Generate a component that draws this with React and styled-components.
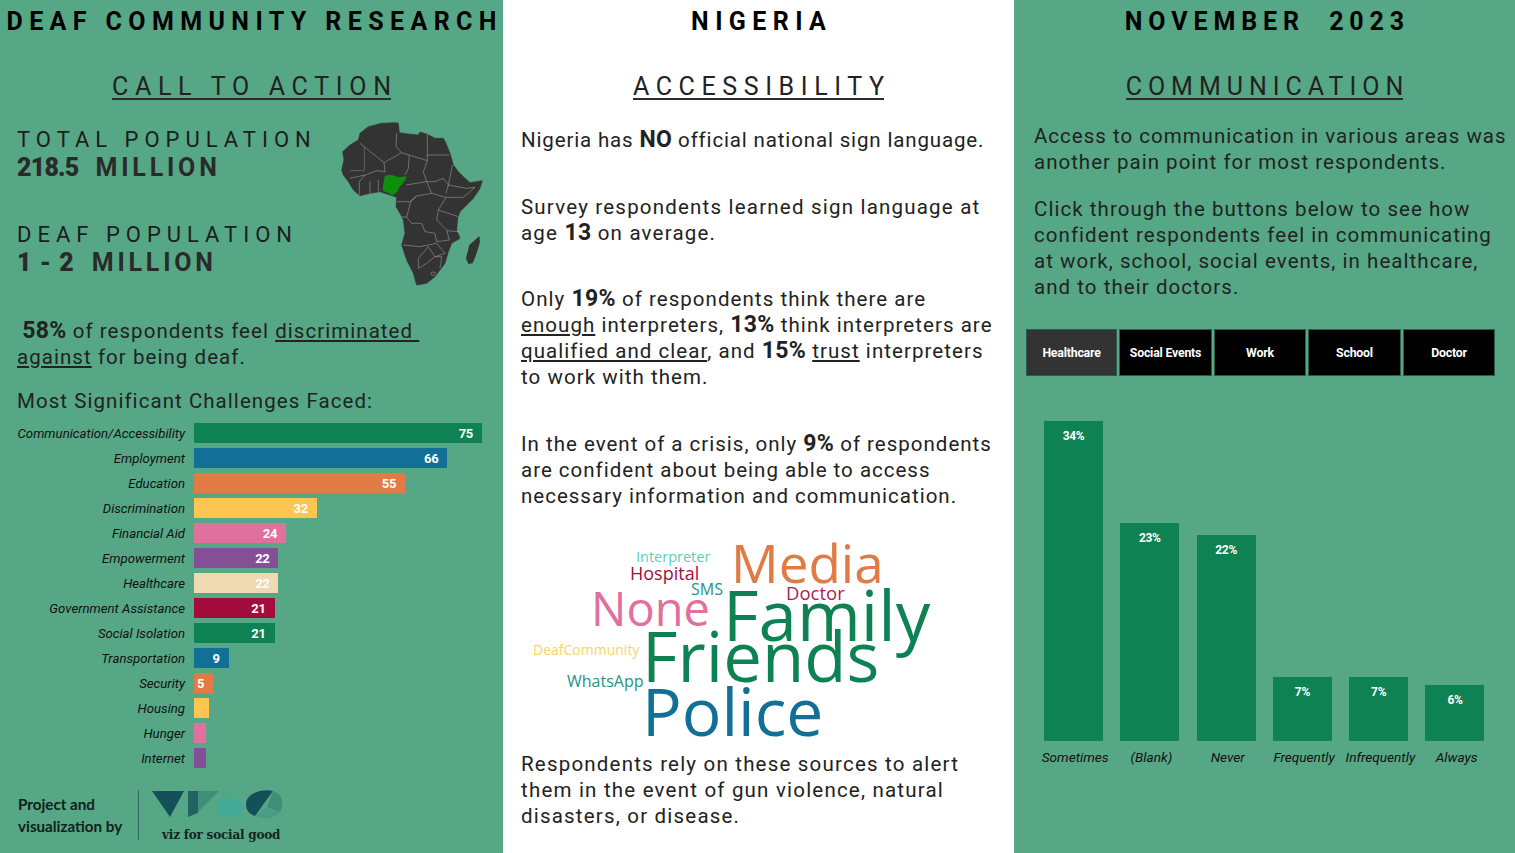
import React from 'react';
import styled, { createGlobalStyle } from 'styled-components';

const Global = createGlobalStyle`
  html, body { margin: 0; padding: 0; background: #fff; }
  body { font-family: 'Roboto', 'Liberation Sans', sans-serif; color: #1d1d1d; }
`;

const GREEN = '#56a786';
const FOREST = '#0f8254';
const BLUE = '#127096';
const ORANGE = '#e07b45';
const YELLOW = '#fec551';
const PINK = '#e0709d';
const PURPLE = '#854f98';
const SAND = '#efd9b3';
const CRIMSON = '#a40c3d';

const Page = styled.div`
  display: grid;
  grid-template-columns: 503px 511px 501px;
  width: 1515px;
  height: 853px;
  overflow: hidden;
`;

const Column = styled.section`
  background: ${p => (p.$white ? '#fff' : GREEN)};
  display: flex;
  flex-direction: column;
  min-width: 0;
`;

const Title = styled.h1`
  margin: 8px 0 0;
  height: 27px;
  line-height: 27px;
  font-size: 25px;
  font-weight: 700;
  letter-spacing: ${p => p.$spacing}px;
  text-indent: ${p => p.$spacing}px;
  color: #000;
  text-align: center;
  white-space: pre;
`;

const Heading = styled.h2`
  margin: 37px 0 0;
  height: 29px;
  padding-left: ${p => p.$spacing}px;
  line-height: 29px;
  font-size: 25px;
  font-weight: 400;
  letter-spacing: ${p => p.$spacing}px;
  text-align: center;
  color: #222;
  span {
    position: relative;
    display: inline-block;
  }
  span::after {
    content: '';
    position: absolute;
    left: 0;
    right: ${p => p.$spacing}px;
    bottom: 1px;
    height: 2px;
    background: #2b2b2b;
  }
`;

const Stats = styled.div`
  display: flex;
  justify-content: space-between;
  padding: 24px 20px 0 17px;
`;

const StatBlock = styled.div`
  margin-bottom: 38px;
  white-space: nowrap;
`;

const StatLabel = styled.div`
  font-size: 22px;
  line-height: 29px;
  letter-spacing: 6px;
`;

const StatValue = styled.div`
  font-size: 25px;
  line-height: 28px;
  font-weight: 700;
  letter-spacing: 3.8px;
  color: #2a2a2a;
  word-spacing: 7px;
  b { letter-spacing: ${p => p.$digits}px; word-spacing: 0; }
`;

const MapBox = styled.div`
  width: 180px;
  height: 190px;
  margin: -15px -17px 0 0;
`;

const Para = styled.p`
  margin: ${p => p.$top || 0}px 0 0;
  padding-left: ${p => p.$left || 18}px;
  font-size: 20.5px;
  line-height: 26px;
  letter-spacing: ${p => p.$ls || 1.05}px;
  color: #222;
  white-space: nowrap;
  strong { font-weight: 700; font-size: 23px; letter-spacing: 0.3px; }
  u { text-decoration-thickness: 2px; text-underline-offset: 2px; }
`;

const Challenges = styled.div`
  display: grid;
  grid-template-columns: 186px 1fr;
  grid-auto-rows: 25px;
  align-items: center;
  margin-top: 6px;
`;

const RowLabel = styled.div`
  text-align: right;
  padding: 2px 1px 0 0;
  font-size: 13.2px;
  font-style: italic;
  color: #111;
  white-space: nowrap;
`;

const HBar = styled.div`
  height: 20px;
  margin-left: 8px;
  background: ${p => p.$color};
  color: #fff;
  font-size: 13px;
  font-weight: 700;
  letter-spacing: -0.3px;
  text-align: right;
  line-height: 21px;
  padding-right: 9px;
  box-sizing: border-box;
`;

const Credit = styled.div`
  display: flex;
  align-items: flex-start;
  margin: 20px 0 0 18px;
`;

const CreditText = styled.div`
  font-family: 'Lato', sans-serif;
  font-size: 15.2px;
  font-weight: 700;
  line-height: 22px;
  width: 120px;
  padding-top: 3px;
  color: #12201c;
  white-space: nowrap;
`;

const CreditDivider = styled.div`
  width: 1px;
  height: 50px;
  background: #2d6a64;
`;

const LogoWrap = styled.div`
  margin-left: 12px;
  display: flex;
  flex-direction: column;
  align-items: flex-start;
`;

const LogoText = styled.div`
  font-family: 'DejaVu Serif', serif;
  font-weight: 700;
  font-size: 12px;
  letter-spacing: -0.2px;
  line-height: 16px;
  margin: 5px 0 0 11px;
  color: #14241f;
  white-space: nowrap;
`;

const Cloud = styled.div`
  position: relative;
  height: 217px;
  margin-top: 25px;
`;

const Word = styled.span`
  position: absolute;
  left: ${p => p.$x}px;
  top: ${p => p.$y}px;
  font-family: 'Open Sans', 'Noto Sans', sans-serif;
  font-size: ${p => p.$size}px;
  line-height: 1;
  color: ${p => p.$color};
  white-space: nowrap;
`;

const Tabs = styled.div`
  display: flex;
  gap: 2px;
  margin: 29px 0 0 12px;
`;

const Tab = styled.button`
  width: ${p => p.$w}px;
  height: 47px;
  border: 1px solid #2c5d4a;
  background: ${p => (p.$active ? '#333' : '#000')};
  color: #fff;
  font-family: inherit;
  font-weight: 700;
  font-size: 12.3px;
  letter-spacing: -0.2px;
  padding: 0;
`;

const Chart = styled.div`
  display: grid;
  grid-template-columns: repeat(6, 76.3px);
  margin: 45px 0 0 23px;
  height: 320px;
  align-items: end;
`;

const VBar = styled.div`
  width: 59px;
  margin-left: 7px;
  height: ${p => p.$h}px;
  background: ${FOREST};
  color: #fff;
  font-size: 12px;
  font-weight: 700;
  letter-spacing: -0.3px;
  text-align: center;
  padding-top: 8px;
  box-sizing: border-box;
`;

const XAxis = styled.div`
  display: grid;
  grid-template-columns: repeat(6, 76.3px);
  margin: 8px 0 0 23px;
`;

const XLabel = styled.div`
  font-size: 13.6px;
  font-style: italic;
  text-align: center;
  color: #111;
  white-space: nowrap;
`;

const challenges = [
  ['Communication/Accessibility', 75, FOREST],
  ['Employment', 66, BLUE],
  ['Education', 55, ORANGE],
  ['Discrimination', 32, YELLOW],
  ['Financial Aid', 24, PINK],
  ['Empowerment', 22, PURPLE],
  ['Healthcare', 22, SAND],
  ['Government Assistance', 21, CRIMSON],
  ['Social Isolation', 21, FOREST],
  ['Transportation', 9, BLUE],
  ['Security', 5, ORANGE],
  ['Housing', 4, YELLOW],
  ['Hunger', 3, PINK],
  ['Internet', 3, PURPLE],
];

const words = [
  ['Media', 731, 536, 53, ORANGE],
  ['Interpreter', 636, 550, 14.5, '#5fcdbb'],
  ['Hospital', 630, 564, 18, CRIMSON],
  ['SMS', 691, 581, 16, '#2a9285'],
  ['Doctor', 786, 584, 18.5, '#ad1c50'],
  ['None', 591, 585, 47, PINK],
  ['Family', 723, 580, 69, FOREST],
  ['Friends', 642, 621, 69, FOREST],
  ['DeafCommunity', 533, 643, 14, '#fbd45f'],
  ['WhatsApp', 567, 673, 16, '#2a9285'],
  ['Police', 642, 677, 66, BLUE],
];

const tabs = [['Healthcare', 91, true], ['Social Events', 93], ['Work', 92], ['School', 93], ['Doctor', 92]];

const answers = [
  ['Sometimes', 34, 320], ['(Blank)', 23, 218], ['Never', 22, 206],
  ['Frequently', 7, 64], ['Infrequently', 7, 64], ['Always', 6, 56],
];

const AfricaMap = () => (
  <svg width="180" height="190" viewBox="0 0 540 570">
    <path fill="#333" stroke="#333" strokeWidth="2" strokeLinejoin="round" d="M225 38L235 40L238 68L265 72L295 75L300 66L320 72L345 85L370 85L378 100L390 130L400 165L415 185L435 205L450 218L487 212L480 235L460 265L440 285L420 305L413 325L410 360L420 385L395 400L385 425L375 460L345 500L320 520L290 525L280 490L260 450L245 405L255 370L250 330L240 310L228 290L230 262L210 255L180 245L150 250L120 257L100 240L85 215L70 195L65 180L72 150L68 125L90 105L115 90L120 70L145 50L185 40Z" />
    <path fill="#333" d="M478 378L480 395L470 430L458 460L445 462L438 445L448 405L465 390Z" />
    <g fill="none" stroke="#b5b5b5" strokeWidth="1.4">
      <path d="M230 70L228 110L245 128L192 158L120 100" />
      <path d="M322 72V135H388M245 128L268 135L322 152V135M268 135L265 175L255 195" />
      <path d="M192 158L195 185L170 182L135 195L90 205" />
      <path d="M133 110V182H90" strokeWidth="2" stroke="#777" />
      <path d="M322 152L310 185L320 215L345 215L370 205L385 225L378 250M398 165L385 225L440 235L465 232L430 262L415 262L378 262" />
      <path d="M258 225L320 215L335 250L290 258L270 275L230 275" />
      <path d="M118 215V255M150 212V250M175 210V245M135 195L118 215" />
      <path d="M290 258L272 275L260 322L245 320M335 250L378 262L355 300L350 330L380 360L388 390L350 395L345 370L315 365L305 340L275 340L260 322" />
      <path d="M355 300L415 320M380 362L418 365M250 405L300 410L350 400L375 430L345 440L325 410L295 445V475L320 460L345 440L365 440L360 475" />
      <ellipse cx="340" cy="491" rx="7" ry="5" />
    </g>
    <path fill="#0d8f0d" d="M195 197Q210 192 225 198Q240 204 258 198Q262 205 250 218Q238 228 232 245L218 257Q205 246 188 242Q188 220 195 197Z" />
  </svg>
);

const VfsgMark = () => (
  <svg width="134" height="32" viewBox="0 0 134 32">
    <path fill="#14505a" d="M1 1H33L19 27Z" />
    <path fill="#21645f" d="M37 1H47V23L37 27Z" />
    <path fill="#3f8f78" d="M47 1H68L47 22Z" />
    <path fill="#4ea98c" d="M67 1H84L74 9H66Z" />
    <path fill="#43aa95" d="M66 9H88C92 12 93 20 90 24C88 26 86 27 82 27H66Z" />
    <path fill="#14505a" d="M122 1C110 -2 95 4 95 14C95 21 99 24 104 26Z" />
    <path fill="#3f8f78" d="M122 1C129 3 132 9 131 15C131 18 130 20 129 22L116 17Z" />
    <path fill="#4a9d80" d="M104 26L116 17L129 22C124 29 113 30 104 26Z" />
  </svg>
);

export default function App() {
  return (
    <Page>
      <Global />
      <Column>
        <Title $spacing={6.4}>DEAF COMMUNITY RESEARCH</Title>
        <Heading $spacing={6.7}><span>CALL TO ACTION</span></Heading>
        <Stats>
          <div>
            <StatBlock>
              <StatLabel>TOTAL POPULATION</StatLabel>
              <StatValue $digits={-0.8}><b>218.5</b> MILLION</StatValue>
            </StatBlock>
            <StatBlock>
              <StatLabel>DEAF POPULATION</StatLabel>
              <StatValue $digits={1}><b>1 - 2</b> MILLION</StatValue>
            </StatBlock>
          </div>
          <MapBox><AfricaMap /></MapBox>
        </Stats>
        <Para $left={17} $top={3}>
          {'\u2009'}<strong>58%</strong> of respondents feel <u>discriminated&nbsp;<br />against</u> for being deaf.
        </Para>
        <Para $left={17} $top={18}>Most Significant Challenges Faced:</Para>
        <Challenges>
          {challenges.map(([name, value, color]) => (
            <React.Fragment key={name}>
              <RowLabel>{name}</RowLabel>
              <HBar $color={color} style={{ width: value * 3.84 }}>{value > 4 ? value : ''}</HBar>
            </React.Fragment>
          ))}
        </Challenges>
        <Credit>
          <CreditText>Project and<br />visualization by</CreditText>
          <CreditDivider />
          <LogoWrap>
            <VfsgMark />
            <LogoText>viz for social good</LogoText>
          </LogoWrap>
        </Credit>
      </Column>

      <Column $white>
        <Title $spacing={6.4}>NIGERIA</Title>
        <Heading $spacing={6.6}><span>ACCESSIBILITY</span></Heading>
        <Para $top={26} $ls={0.85}>Nigeria has <strong>NO</strong> official national sign language.</Para>
        <Para $top={41} $ls={1.2}>Survey respondents learned sign language at<br />age <strong>13</strong> on average.</Para>
        <Para $top={40}>
          Only <strong>19%</strong> of respondents think there are<br />
          <u>enough</u> interpreters, <strong>13%</strong> think interpreters are<br />
          <u>qualified and clear</u>, and <strong>15%</strong> <u>trust</u> interpreters<br />
          to work with them.
        </Para>
        <Para $top={41} $ls={1}>
          In the event of a crisis, only <strong>9%</strong> of respondents<br />
          are confident about being able to access<br />
          necessary information and communication.
        </Para>
        <Cloud>
          {words.map(([text, x, y, size, color]) => (
            <Word key={text} $x={x - 503} $y={y - 534} $size={size} $color={color}>{text}</Word>
          ))}
        </Cloud>
        <Para $ls={1.2}>Respondents rely on these sources to alert<br />them in the event of gun violence, natural<br />disasters, or disease.</Para>
      </Column>

      <Column>
        <Title $spacing={5.9}>NOVEMBER  2023</Title>
        <Heading $spacing={6}><span>COMMUNICATION</span></Heading>
        <Para $top={22} $left={20} $ls={1}>Access to communication in various areas was<br />another pain point for most respondents.</Para>
        <Para $top={21} $left={20}>Click through the buttons below to see how<br />confident respondents feel in communicating<br />at work, school, social events, in healthcare,<br />and to their doctors.</Para>
        <Tabs>
          {tabs.map(([name, w, active]) => <Tab key={name} $w={w} $active={active}>{name}</Tab>)}
        </Tabs>
        <Chart>
          {answers.map(([name, value, h]) => <VBar key={name} $h={h}>{value}%</VBar>)}
        </Chart>
        <XAxis>
          {answers.map(([name]) => <XLabel key={name}>{name}</XLabel>)}
        </XAxis>
      </Column>
    </Page>
  );
}
